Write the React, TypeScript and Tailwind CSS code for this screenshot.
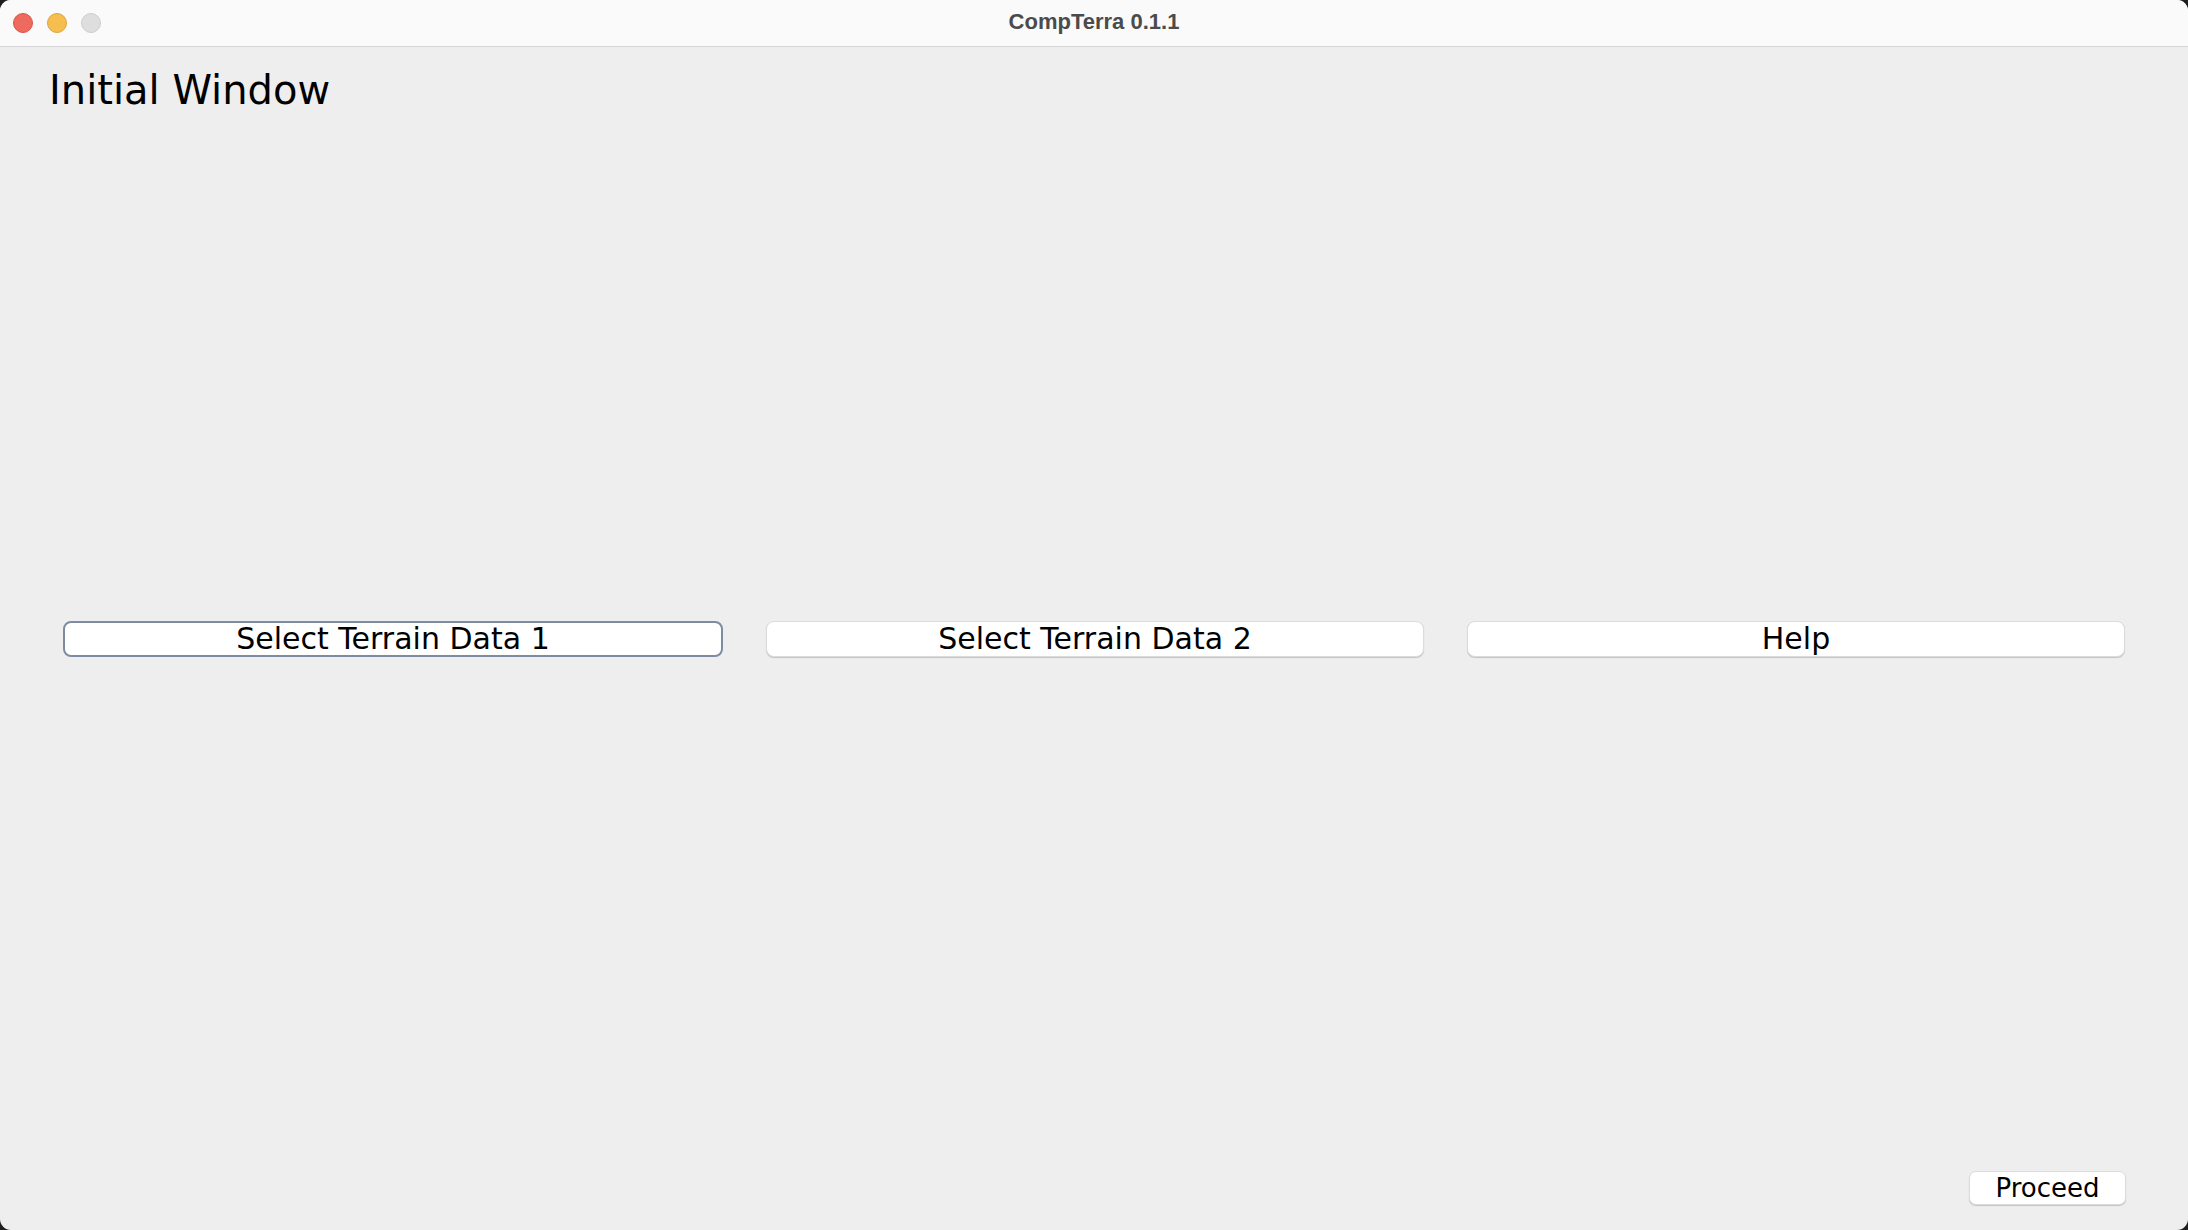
const font = { fontFamily: '"DejaVu Sans", "Liberation Sans", sans-serif' };

const TrafficLights = () => (
    <div className="flex items-center gap-[14px] pl-[13px]">
        <span className="block w-[20px] h-[20px] rounded-full bg-[#ee6a5f] border border-[#d6544a]" />
        <span className="block w-[20px] h-[20px] rounded-full bg-[#f5be4f] border border-[#d9a53f]" />
        <span className="block w-[20px] h-[20px] rounded-full bg-[#dedede] border border-[#cdcdcd]" />
    </div>
);

const WindowButton = ({ label, focused }: { label: string; focused?: boolean }) => (
    <button
        className={
            focused
                ? "flex-1 h-[36px] rounded-[8px] bg-white border-2 border-[#7d8ca3] text-[30px] leading-[32px] text-black"
                : "flex-1 h-[36px] rounded-[8px] bg-white border border-[#dcdcdc] shadow-[0_1px_1px_rgba(0,0,0,0.18)] text-[30px] leading-[34px] text-black"
        }
        style={font}
    >
        {label}
    </button>
);

export default function App() {
    return (
        <div className="w-[2188px] h-[1230px] bg-[#1e1e1e]">
            <div className="w-full h-full rounded-[11px] overflow-hidden bg-[#eeeeee] flex flex-col">
                {/* title bar */}
                <div className="relative h-[47px] shrink-0 bg-[#fafafa] border-b border-[#d6d6d6] flex items-center">
                    <TrafficLights />
                    <div className="absolute inset-0 flex items-center justify-center pointer-events-none">
                        <span
                            className="mb-[2px] text-[22px] leading-[22px] font-bold text-[#4b4b4b]"
                            style={{ fontFamily: '"Liberation Sans", Arial, sans-serif' }}
                        >
                            CompTerra 0.1.1
                        </span>
                    </div>
                </div>

                {/* content */}
                <div className="flex-1 flex flex-col">
                    <div className="h-[63px] shrink-0 pt-[23px] pl-[49px]">
                        <h1 className="text-[40px] leading-[40px] text-black" style={font}>Initial Window</h1>
                    </div>

                    <div className="flex-1 flex items-center px-[63px] gap-[43px]">
                        <WindowButton label="Select Terrain Data 1" focused />
                        <WindowButton label="Select Terrain Data 2" />
                        <WindowButton label="Help" />
                    </div>

                    <div className="h-[63px] shrink-0 flex justify-end items-start pt-[4px] pr-[62px]">
                        <button
                            className="w-[157px] h-[34px] rounded-[7px] bg-white border border-[#dcdcdc] shadow-[0_1px_1px_rgba(0,0,0,0.18)] text-[26px] leading-[32px] text-black"
                            style={font}
                        >
                            Proceed
                        </button>
                    </div>
                </div>
            </div>
        </div>
    );
}
